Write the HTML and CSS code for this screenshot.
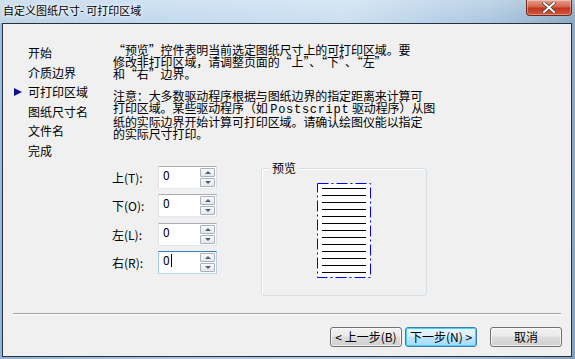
FILE: index.html
```html
<!DOCTYPE html>
<html lang="zh-CN">
<head>
  <meta charset="UTF-8">
  <title>自定义图纸尺寸- 可打印区域</title>
  <link rel="stylesheet" href="styles.css">
</head>
<body>
  <div class="window">
    <div class="titlebar">
      <span class="title">自定义图纸尺寸- 可打印区域</span>
      <span class="close">
        <svg width="14" height="11" viewBox="0 0 14 11">
          <path d="M2 1 L12 10 M12 1 L2 10" stroke="#3a3a3a" stroke-width="3.4" stroke-linecap="square"/>
          <path d="M2 1 L12 10 M12 1 L2 10" stroke="#fff" stroke-width="2" stroke-linecap="square"/>
        </svg>
      </span>
    </div>

    <div class="client">
      <div class="main">
        <ul class="steps">
          <li>开始</li>
          <li>介质边界</li>
          <li class="current">可打印区域</li>
          <li>图纸尺寸名</li>
          <li>文件名</li>
          <li>完成</li>
        </ul>

        <div class="content">
          <p class="intro">“预览”控件表明当前选定图纸尺寸上的可打印区域。要<br>修改非打印区域，请调整页面的“上”、“下”、“左”<br>和“右”边界。</p>
          <p class="note">注意：大多数驱动程序根据与图纸边界的指定距离来计算可<br>打印区域。某些驱动程序（如 <span class="mono">Postscript</span> 驱动程序）从图<br>纸的实际边界开始计算可打印区域。请确认绘图仪能以指定<br>的实际尺寸打印。</p>

          <div class="settings">
            <div class="margins">
              <div class="row">
                <label>上(T):</label>
                <div class="spin"><span class="value">0</span><span class="arrows"><span class="up"></span><span class="down"></span></span></div>
              </div>
              <div class="row">
                <label>下(O):</label>
                <div class="spin"><span class="value">0</span><span class="arrows"><span class="up"></span><span class="down"></span></span></div>
              </div>
              <div class="row">
                <label>左(L):</label>
                <div class="spin"><span class="value">0</span><span class="arrows"><span class="up"></span><span class="down"></span></span></div>
              </div>
              <div class="row">
                <label>右(R):</label>
                <div class="spin focused"><span class="value">0<i class="caret"></i></span><span class="arrows"><span class="up"></span><span class="down"></span></span></div>
              </div>
            </div>

            <div class="preview">
              <span class="legend">预览</span>
              <svg class="page" width="54" height="95" viewBox="0 0 54 95">
                <rect x="0.5" y="0.5" width="53" height="94" fill="#fff" stroke="#0000ff" stroke-dasharray="11 3 2 3"/>
                <g stroke="#000" stroke-width="1.2">
                  <line x1="5" x2="49" y1="5.5" y2="5.5"/>
                  <line x1="5" x2="49" y1="12.5" y2="12.5"/>
                  <line x1="5" x2="49" y1="19.5" y2="19.5"/>
                  <line x1="5" x2="49" y1="26.5" y2="26.5"/>
                  <line x1="5" x2="49" y1="33.5" y2="33.5"/>
                  <line x1="5" x2="49" y1="40.5" y2="40.5"/>
                  <line x1="5" x2="49" y1="47.5" y2="47.5"/>
                  <line x1="5" x2="49" y1="54.5" y2="54.5"/>
                  <line x1="5" x2="49" y1="61.5" y2="61.5"/>
                  <line x1="5" x2="49" y1="68.5" y2="68.5"/>
                  <line x1="5" x2="49" y1="75.5" y2="75.5"/>
                  <line x1="5" x2="49" y1="82.5" y2="82.5"/>
                  <line x1="5" x2="49" y1="89.5" y2="89.5"/>
                </g>
              </svg>
            </div>
          </div>
        </div>
      </div>

      <div class="sep"></div>

      <div class="buttons">
        <button class="btn">&lt; 上一步(B)</button>
        <button class="btn default">下一步(N) &gt;</button>
        <button class="btn cancel">取消</button>
      </div>
    </div>
  </div>
</body>
</html>
```

FILE: styles.css
```css
* {
  box-sizing: border-box;
}

body {
  margin: 0;
  width: 575px;
  height: 359px;
  overflow: hidden;
  font-family: "Noto Sans CJK SC", "DejaVu Sans", sans-serif;
  font-size: 12px;
  color: #000;
  background: linear-gradient(90deg, #9fbfdc 0%, #bcd6ee 30%, #c8ddf1 60%, #aac6e0 85%, #8ea9c2 100%);
}

.window {
  height: 359px;
  display: flex;
  flex-direction: column;
  background: linear-gradient(180deg, rgba(255,255,255,0.25) 0, rgba(255,255,255,0) 23px, rgba(90,130,180,0.2) 100%);
}

.titlebar {
  height: 23px;
  display: flex;
  align-items: flex-start;
  background: linear-gradient(90deg, rgba(255,255,255,0.35) 0, rgba(255,255,255,0.1) 160px, rgba(255,255,255,0) 100%);
}

.title {
  font-size: 11px;
  line-height: 21px;
  padding-left: 3px;
  text-shadow: 0 0 6px #fff, 0 0 3px #fff;
}

.close {
  margin-left: auto;
  margin-right: 3px;
  width: 46px;
  height: 16px;
  border: 1px solid #6b2a20;
  border-top: none;
  border-radius: 0 0 4px 4px;
  background: linear-gradient(180deg, #e8a190 0%, #d6634c 45%, #c1361f 55%, #d4583a 100%);
  box-shadow: inset 0 0 0 1px rgba(255,255,255,0.35);
  display: flex;
  align-items: center;
  justify-content: center;
}

.close svg {
  display: block;
}

.client {
  margin: 0 3px 0 2px;
  height: 334px;
  border: 1px solid #25313d;
  background: #f0f0f0;
  display: flex;
  flex-direction: column;
}

.main {
  height: 289px;
  display: flex;
}

.steps {
  list-style: none;
  margin: 0;
  padding: 19px 0 0 11px;
  width: 110px;
}

.steps li {
  line-height: 19.6px;
  height: 19.6px;
  padding-left: 14px;
  position: relative;
}

.steps li.current::before {
  content: "";
  position: absolute;
  left: 0;
  top: 6px;
  border-left: 8px solid #10108a;
  border-top: 4px solid transparent;
  border-bottom: 4px solid transparent;
}

.content {
  padding-top: 20px;
}

.content p {
  margin: 0;
  line-height: 12px;
  white-space: nowrap;
  letter-spacing: -0.1px;
}

.content p.note {
  margin-top: 10px;
}

.mono {
  font-family: "Liberation Mono", monospace;
  font-size: 12px;
  letter-spacing: 0.7px;
}

.settings {
  display: flex;
  align-items: flex-start;
  margin-top: 26px;
}

.margins {
  width: 104px;
  display: flex;
  flex-direction: column;
  gap: 5.3px;
}

.row {
  display: flex;
  align-items: center;
}

.row label {
  width: 45px;
  margin-left: -1px;
  margin-right: 1px;
}

.spin {
  width: 59px;
  height: 23px;
  border: 1px solid #abadb3;
  border-left-color: #e2e3ea;
  border-right-color: #dbdfe6;
  border-bottom-color: #e3e9ef;
  background: #fff;
  display: flex;
  justify-content: space-between;
  padding: 1px;
}

.spin.focused {
  border-color: #3d7bad #b5cfe7 #b7d9ed #a4c9e3;
}

.value {
  padding-left: 3px;
  line-height: 14px;
  position: relative;
}

.caret {
  position: absolute;
  top: 1px;
  left: 11px;
  width: 1px;
  height: 13px;
  background: #000;
}

.arrows {
  display: flex;
  flex-direction: column;
  gap: 1px;
  width: 15px;
}

.arrows span {
  flex: 1;
  border: 1px solid #a9b3bf;
  border-radius: 1px;
  background: linear-gradient(180deg, #fbfbfb, #e6e6e6);
  display: flex;
  align-items: center;
  justify-content: center;
}

.arrows .up::after {
  content: "";
  border-bottom: 3px solid #4b5d86;
  border-left: 3px solid transparent;
  border-right: 3px solid transparent;
}

.arrows .down::after {
  content: "";
  border-top: 3px solid #4b5d86;
  border-left: 3px solid transparent;
  border-right: 3px solid transparent;
}

.preview {
  position: relative;
  margin-left: 44px;
  margin-top: 2px;
  width: 166px;
  height: 128px;
  border: 1px solid #d5dfe5;
  border-radius: 3px;
  box-shadow: inset 1px 1px 0 #fff;
}

.legend {
  position: absolute;
  top: -8px;
  left: 7px;
  padding: 0 3px;
  background: #f0f0f0;
  line-height: 14px;
}

.page {
  display: block;
  margin: 14px auto 0;
}

.sep {
  margin: 0 10px;
  border-top: 1px solid #a0a0a0;
  border-bottom: 1px solid #fff;
}

.buttons {
  display: flex;
  justify-content: flex-end;
  padding-right: 9px;
  margin-top: 12px;
}

.btn {
  width: 72px;
  height: 20px;
  padding: 0;
  font-family: inherit;
  font-size: 12px;
  line-height: 16px;
  color: #000;
  border: 1px solid #707070;
  border-radius: 3px;
  background: linear-gradient(180deg, #f2f2f2 0%, #ebebeb 45%, #dddddd 50%, #cfcfcf 100%);
  box-shadow: inset 0 0 0 1px rgba(255,255,255,0.7);
  white-space: nowrap;
}

.btn.default {
  margin-left: 3px;
  border-color: #3c7fb1;
  background: linear-gradient(180deg, #eaf6fd 0%, #d9f0fc 45%, #bee6fd 50%, #a7d9f5 100%);
  box-shadow: inset 0 0 0 1px #48d0f9;
}

.btn.cancel {
  margin-left: 13px;
}
```
